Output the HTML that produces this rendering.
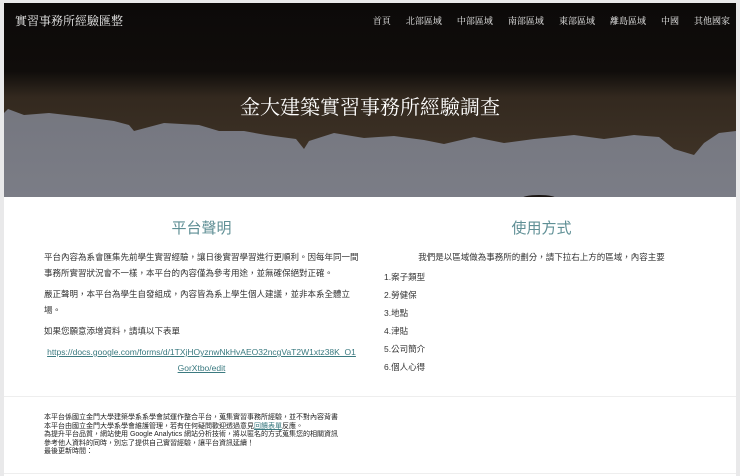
<!DOCTYPE html>
<html><head><meta charset="utf-8"><style>
*{margin:0;padding:0;box-sizing:border-box}
body{width:740px;height:476px;background:#e9e9ea;font-family:"Liberation Sans","Noto Sans CJK TC",sans-serif;overflow:hidden;position:relative}
#page{position:absolute;left:4px;top:3px;width:732px;height:473px;background:#fff}
#hero{position:absolute;left:0;top:0;width:732px;height:194px;background:linear-gradient(#6e6f78 0,#7b7d86 194px);overflow:hidden}
.logo{position:absolute;left:11px;top:9px;color:#eee;font-size:12px;font-family:"Liberation Serif","Noto Serif CJK SC",serif}
.nav{position:absolute;right:6px;top:11px;color:#eee;font-size:9px;font-family:"Liberation Serif","Noto Serif CJK SC",serif}
.nav span{margin-left:15px}
.title{position:absolute;left:0;width:732px;text-align:center;top:88px;color:#fff;font-size:20px;font-family:"Liberation Serif","Noto Serif CJK SC",serif}
h2{font-weight:normal;color:#5f8f95;font-size:15px;text-align:center}
.col{position:absolute;top:218px;font-size:8.5px;color:#333;line-height:16px}
.col p{margin-bottom:5px}
a{color:#3b7a80;text-decoration:underline}
.foot{position:absolute;left:40px;top:411px;font-size:7px;line-height:8.6px;color:#222}
.line{position:absolute;left:0;width:732px;height:1px;background:#eee}
</style></head><body>
<div id="page">
<div id="hero">
<svg width="732" height="194" style="position:absolute;left:0;top:0">
<defs><linearGradient id="r" x1="0" y1="0" x2="0" y2="1"><stop offset="0" stop-color="#0c0a09"/><stop offset=".45" stop-color="#100d0b"/><stop offset=".62" stop-color="#33291f"/><stop offset="1" stop-color="#3e3226"/></linearGradient></defs>
<path d="M0 0 L732 0 L732 128 L715 130 L700 140 L690 152 L670 146 L655 134 L630 132 L600 136 L570 132 L530 136 L500 140 L470 134 L440 141 L420 137 L390 133 L360 135 L330 130 L305 138 L300 146 L292 136 L262 132 L240 128 L215 128 L195 122 L160 120 L130 128 L125 122 L110 118 L80 114 L45 110 L20 112 L4 106 L0 110 Z" fill="url(#r)"/>
<ellipse cx="535" cy="196" rx="18" ry="4" fill="#1a1512"/>
</svg>
<div class="logo">實習事務所經驗匯整</div>
<div class="nav"><span>首頁</span><span>北部區域</span><span>中部區域</span><span>南部區域</span><span>東部區域</span><span>離島區域</span><span>中國</span><span>其他國家</span></div>
<div class="title">金大建築實習事務所經驗調查</div>
</div>
<div class="col" style="left:40px;width:315px">
<h2 style="margin-bottom:12px">平台聲明</h2>
<p>平台內容為系會匯集先前學生實習經驗，讓日後實習學習進行更順利。因每年同一間事務所實習狀況會不一樣，本平台的內容僅為參考用途，並無確保絕對正確。</p>
<p>嚴正聲明，本平台為學生自發組成，內容皆為系上學生個人建議，並非本系全體立場。</p>
<p>如果您願意添增資料，請填以下表單</p>
<p style="text-align:center;word-break:break-all"><a>https://docs.google.com/forms/d/1TXjHOyznwNkHvAEO32ncgVaT2W1xtz38K_O1GorXtbo/edit</a></p>
</div>
<div class="col" style="left:380px;width:315px">
<h2 style="margin-bottom:12px">使用方式</h2>
<p style="text-align:center;margin-bottom:3px">我們是以區域做為事務所的劃分，請下拉右上方的區域，內容主要</p>
<p style="line-height:18px">1.案子類型<br>2.勞健保<br>3.地點<br>4.津貼<br>5.公司簡介<br>6.個人心得</p>
</div>
<div class="line" style="top:393px"></div>
<div class="foot">本平台係國立金門大學建築學系系學會試運作整合平台，蒐集實習事務所經驗，並不對內容背書<br>本平台由國立金門大學系學會維護管理，若有任何疑問歡迎透過意見<a>回饋表單</a>反應。<br>為提升平台品質，網站使用 Google Analytics 網站分析技術，將以匿名的方式蒐集您的相關資訊<br>參考他人資料的同時，別忘了提供自己實習經驗，讓平台資訊延續！<br>最後更新時間：</div>
<div class="line" style="top:470px"></div>
</div>
</body></html>
